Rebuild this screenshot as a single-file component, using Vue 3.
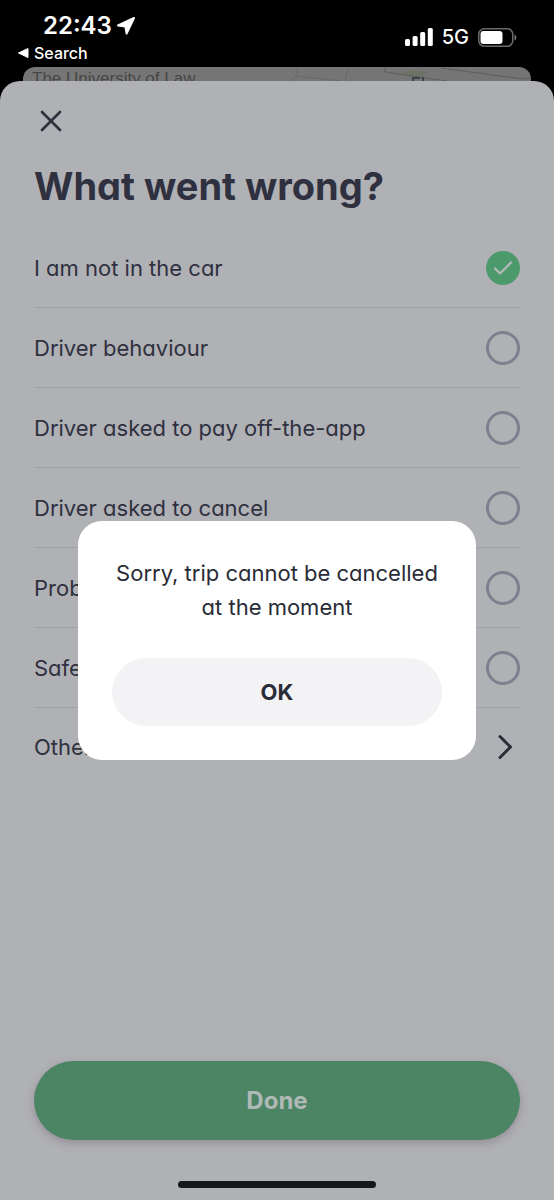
<script setup>
import { ref } from 'vue'

const reasons = [
  { id: 'not-in-car', label: 'I am not in the car' },
  { id: 'behaviour', label: 'Driver behaviour' },
  { id: 'off-app', label: 'Driver asked to pay off-the-app' },
  { id: 'asked-cancel', label: 'Driver asked to cancel' },
  { id: 'problem', label: 'Problem' },
  { id: 'safety', label: 'Safety' },
]
const selected = ref('not-in-car')
const dialogOpen = ref(true)
</script>

<template>
  <div class="screen">
    <header class="status">
      <div class="status-left">
        <div class="clock">
          <span>22:43</span>
          <svg width="20" height="20" viewBox="0 0 20 20" aria-hidden="true">
            <path d="M18 2 10.600 17.500 9.400 10.600 2 9.400Z" fill="#fff" stroke="#fff" stroke-width="2" stroke-linejoin="round" />
          </svg>
        </div>
        <a class="back" href="#">
          <svg width="11" height="10" viewBox="0 0 11 10" aria-hidden="true">
            <path d="M10 .5v9L.5 5z" fill="#fff" stroke="#fff" stroke-linejoin="round" />
          </svg>
          Search
        </a>
      </div>
      <div class="status-right">
        <svg width="28" height="18" viewBox="0 0 28 18" aria-hidden="true" fill="#fff">
          <rect x="0" y="11" width="5" height="7" rx="1.5" />
          <rect x="7.600" y="8" width="5" height="10" rx="1.500" />
          <rect x="15.200" y="4" width="5" height="14" rx="1.500" />
          <rect x="22.800" y="0" width="5" height="18" rx="1.500" />
        </svg>
        <span class="network">5G</span>
        <svg width="39" height="19" viewBox="0 0 39 19" aria-hidden="true">
          <rect x=".75" y=".75" width="34" height="17.500" rx="5.500" fill="none" stroke="#6a6a6a" stroke-width="1.500" />
          <rect x="2.500" y="3" width="22" height="13" rx="3" fill="#fff" />
          <path d="M36.500 6.500c2.400 1 2.400 5 0 6z" fill="#777" />
        </svg>
      </div>
    </header>

    <div class="map">
      <span class="place">The University of Law</span>
      <svg class="streets" width="240" height="14" viewBox="0 0 240 14" aria-hidden="true" fill="none">
        <path d="M0 14 5 9 50 14M6 0v9M57 0l-3 14" stroke="#686868" />
        <path d="M94 0v5l62 9M150 1l82 11 8-1" stroke="#5e5e5e" />
        <path d="M110 5q12-3 26 0l-4 4-18-2z" fill="#6b7363" />
        <path d="M122 14v-3h7M132 10v4" stroke="#3e4148" stroke-width="2" />
      </svg>
    </div>

    <main class="sheet">
      <button class="close" type="button" aria-label="Close">
        <svg width="22" height="22" viewBox="0 0 22 22" aria-hidden="true">
          <path d="M2 2l18 18M20 2 2 20" stroke="#2e303c" stroke-width="2.600" stroke-linecap="round" />
        </svg>
      </button>
      <h1>What went wrong?</h1>

      <div class="reasons">
        <label v-for="r in reasons" :key="r.id" class="row" :for="r.id">
          <span>{{ r.label }}</span>
          <span class="choice">
            <input :id="r.id" v-model="selected" type="radio" name="reason" :value="r.id" />
            <svg v-if="selected === r.id" class="tick" width="34" height="34" viewBox="0 0 34 34" aria-hidden="true">
              <path d="M9 17.500l5 5L25 11.500" fill="none" stroke="#b4bab8" stroke-width="2.200" stroke-linecap="round" stroke-linejoin="round" />
            </svg>
          </span>
        </label>
        <button class="row other" type="button">
          <span>Other</span>
          <svg width="34" height="26" viewBox="0 0 34 26" aria-hidden="true">
            <path d="M14 2.500 24.500 13 14 23.500" fill="none" stroke="#2a2c36" stroke-width="3" stroke-linecap="round" stroke-linejoin="round" />
          </svg>
        </button>
      </div>

      <button class="done" type="button">Done</button>
      <div class="home"></div>

      <div v-if="dialogOpen" class="overlay">
        <div class="dialog" role="alertdialog" aria-modal="true" aria-labelledby="message">
          <p id="message">Sorry, trip cannot be cancelled at the moment</p>
          <button class="ok" type="button" @click="dialogOpen = false">OK</button>
        </div>
      </div>
    </main>
  </div>
</template>

<style>
body {
  background: #000;
}
</style>

<style scoped>
* {
  box-sizing: border-box;
}
.screen {
  display: flex;
  flex-direction: column;
  min-height: 100vh;
  background: #000;
  color: #2f3040;
  font-family: Inter, "Liberation Sans", sans-serif;
  font-feature-settings: "cv11";
}
button {
  padding: 0;
  border: 0;
  background: none;
  color: inherit;
  font: inherit;
  font-feature-settings: inherit;
  cursor: pointer;
}
.status {
  display: flex;
  justify-content: space-between;
  height: 67px;
  padding: 12px 37px 0 18px;
  color: #fff;
  font-feature-settings: normal;
}
.clock {
  display: flex;
  align-items: center;
  gap: 4px;
  padding-left: 25px;
  font-size: 24px;
  font-weight: 600;
  line-height: 28px;
}
.back {
  display: flex;
  align-items: center;
  gap: 5px;
  color: #fff;
  font-size: 16px;
  font-weight: 500;
  line-height: 26px;
  text-decoration: none;
}
.status-right {
  display: flex;
  align-items: center;
  height: 50px;
}
.network {
  margin: 0 9px;
  font-size: 20px;
  font-weight: 500;
}
.map {
  position: relative;
  height: 14px;
  margin: 0 23px;
  padding-left: 9px;
  overflow: hidden;
  border-radius: 12px 12px 0 0;
  background: #757575;
  color: #464646;
  font: 17px/24px "Liberation Sans", sans-serif;
}
.streets {
  position: absolute;
  top: 0;
  right: 0;
}
.sheet {
  position: relative;
  display: flex;
  flex: 1;
  flex-direction: column;
  padding: 29px 34px 12px;
  border-radius: 20px 20px 0 0;
  background: #b0b1b5;
}
.close {
  display: flex;
  width: 34px;
  height: 22px;
  justify-content: center;
}
h1 {
  margin: 28px 0 16px;
  font-size: 38px;
  font-weight: 700;
  line-height: 52px;
}
.reasons {
  font-size: 22px;
}
.row {
  display: flex;
  width: 100%;
  height: 80px;
  align-items: center;
  justify-content: space-between;
  border-bottom: 1px solid #a0a1a7;
  text-align: left;
}
.row.other {
  height: 77px;
  border-bottom: 0;
}
.choice {
  position: relative;
  display: flex;
}
input {
  width: 34px;
  height: 34px;
  margin: 0;
  appearance: none;
  border: 3px solid #7f808f;
  border-radius: 50%;
}
input:checked {
  border: 0;
  background: #4c9a6c;
}
.tick {
  position: absolute;
  inset: 0;
  pointer-events: none;
}
.done {
  height: 79px;
  margin-top: auto;
  border-radius: 40px;
  background: #4b8564;
  box-shadow: 0 3px 8px rgb(80 60 80 / 30%);
  color: #b0b9b5;
  font-size: 24px;
  font-weight: 700;
}
.home {
  width: 198px;
  height: 7px;
  margin: 41px auto 0;
  border-radius: 4px;
  background: #161817;
}
.overlay {
  position: absolute;
  inset: 0;
  display: flex;
  align-items: center;
  justify-content: center;
  padding: 0 78px;
}
.dialog {
  width: 100%;
  padding: 35px 34px 34px;
  border-radius: 24px;
  background: #fff;
  color: #292b36;
  font-size: 22px;
  line-height: 34px;
  text-align: center;
}
.dialog p {
  margin: 0 0 34px;
}
.ok {
  width: 100%;
  height: 68px;
  border-radius: 34px;
  background: #f3f3f5;
  font-weight: 700;
}
</style>
